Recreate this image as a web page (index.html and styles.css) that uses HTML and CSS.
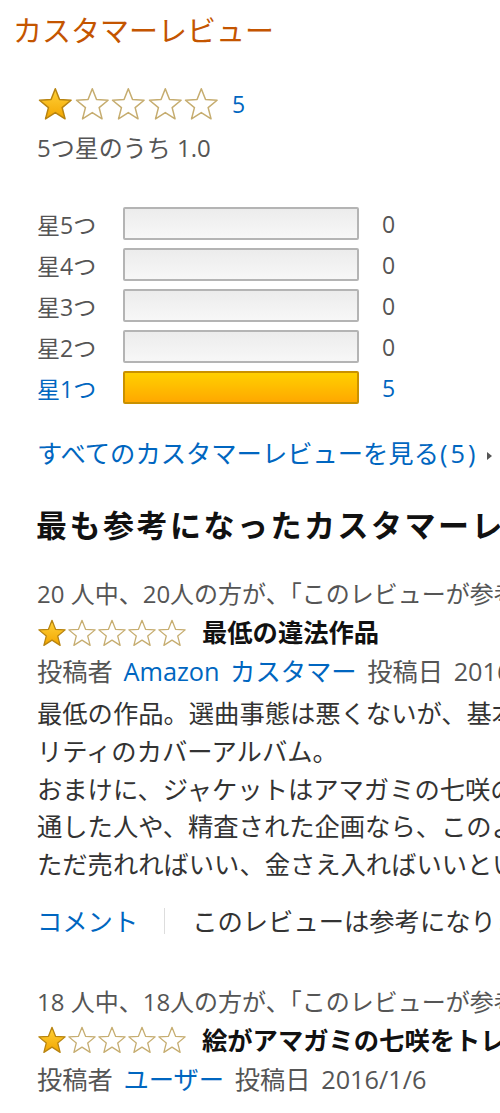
FILE: index.html
```html
<!DOCTYPE html>
<html lang="ja">
<head>
<meta charset="utf-8">
<title>カスタマーレビュー</title>
<link rel="stylesheet" href="styles.css">
</head>
<body>
<svg class="defs" width="0" height="0" aria-hidden="true">
  <defs>
    <linearGradient id="gold" x1="0" y1="0" x2="0" y2="1">
      <stop offset="0" stop-color="#ffd23a"/>
      <stop offset="1" stop-color="#f3a600"/>
    </linearGradient>
    <symbol id="star-full" viewBox="-1 -1 26 26">
      <path d="M12 1 L15.06 8.79 L23.41 9.29 L16.95 14.61 L19.05 22.71 L12 18.2 L4.95 22.71 L7.05 14.61 L0.59 9.29 L8.94 8.79 Z" fill="url(#gold)" stroke="#b88410" stroke-width="1.1" stroke-linejoin="round"/>
    </symbol>
    <symbol id="star-empty" viewBox="-1 -1 26 26">
      <path d="M12 1 L15.06 8.79 L23.41 9.29 L16.95 14.61 L19.05 22.71 L12 18.2 L4.95 22.71 L7.05 14.61 L0.59 9.29 L8.94 8.79 Z" fill="#fff" stroke="#c6ad70" stroke-width="1.1" stroke-linejoin="round"/>
    </symbol>
  </defs>
</svg>

<div class="page">
  <h2 class="title">カスタマーレビュー</h2>

  <div class="summary">
    <div class="stars-row">
      <span class="stars big">
        <svg class="star"><use href="#star-full"/></svg><svg class="star"><use href="#star-empty"/></svg><svg class="star"><use href="#star-empty"/></svg><svg class="star"><use href="#star-empty"/></svg><svg class="star"><use href="#star-empty"/></svg>
      </span>
      <a class="link total">5</a>
    </div>
    <div class="avg">5つ星のうち 1.0</div>
  </div>

  <div class="histogram">
    <div class="hist-row"><span class="hist-label">星5つ</span><span class="bar"></span><span class="hist-count">0</span></div>
    <div class="hist-row"><span class="hist-label">星4つ</span><span class="bar"></span><span class="hist-count">0</span></div>
    <div class="hist-row"><span class="hist-label">星3つ</span><span class="bar"></span><span class="hist-count">0</span></div>
    <div class="hist-row"><span class="hist-label">星2つ</span><span class="bar"></span><span class="hist-count">0</span></div>
    <div class="hist-row active"><span class="hist-label">星1つ</span><span class="bar filled"></span><span class="hist-count">5</span></div>
  </div>

  <a class="link all-link">すべてのカスタマーレビューを見る<span class="paren">(5)</span><span class="arrow"></span></a>

  <h3 class="section-heading">最も参考になったカスタマーレビュー</h3>

  <div class="review">
    <div class="helpful">20 人中、20人の方が、「このレビューが参考になった」と投票しています。</div>
    <div class="review-head">
      <span class="stars small">
        <svg class="star"><use href="#star-full"/></svg><svg class="star"><use href="#star-empty"/></svg><svg class="star"><use href="#star-empty"/></svg><svg class="star"><use href="#star-empty"/></svg><svg class="star"><use href="#star-empty"/></svg>
      </span>
      <span class="review-title">最低の違法作品</span>
    </div>
    <div class="byline">投稿者 <a class="link">Amazon カスタマー</a> 投稿日 2016/1/5</div>
    <div class="review-body">最低の作品。選曲事態は悪くないが、基本的にはクオ<br>リティのカバーアルバム。<br>おまけに、ジャケットはアマガミの七咲のトレースです。<br>通した人や、精査された企画なら、このようなことはないはず。<br>ただ売れればいい、金さえ入ればいいという姿勢が見えます。</div>
    <div class="actions"><a class="link">コメント</a><span class="sep"></span><span class="ask">このレビューは参考になりましたか？</span></div>
  </div>

  <div class="review second">
    <div class="helpful">18 人中、18人の方が、「このレビューが参考になった」と投票しています。</div>
    <div class="review-head">
      <span class="stars small">
        <svg class="star"><use href="#star-full"/></svg><svg class="star"><use href="#star-empty"/></svg><svg class="star"><use href="#star-empty"/></svg><svg class="star"><use href="#star-empty"/></svg><svg class="star"><use href="#star-empty"/></svg>
      </span>
      <span class="review-title">絵がアマガミの七咲をトレースしたもの</span>
    </div>
    <div class="byline">投稿者 <a class="link">ユーザー</a> 投稿日 2016/1/6</div>
  </div>
</div>
</body>
</html>
```

FILE: styles.css
```css
html, body {
  margin: 0;
  padding: 0;
  background: #fff;
}

body {
  width: 500px;
  height: 1113px;
  overflow: hidden;
  font-family: "Open Sans", "Noto Sans CJK JP", sans-serif;
  font-size: 25.3px;
  color: #555;
}

.defs {
  position: absolute;
  width: 0;
  height: 0;
}

.page {
  width: 900px;
  white-space: nowrap;
}

.link {
  color: #0066c0;
  text-decoration: none;
}

.title {
  margin: 0;
  padding: 13px 0 0 13px;
  font-size: 29px;
  line-height: 36px;
  font-weight: normal;
  color: #c45500;
}

.summary {
  margin-top: 37px;
  padding-left: 37px;
}

.stars-row {
  display: flex;
  align-items: center;
  height: 36px;
}

.stars {
  display: inline-flex;
  align-items: center;
}

.stars.big .star {
  width: 36.6px;
  height: 36px;
}

.stars.small .star {
  width: 30px;
  height: 30px;
}

.total {
  margin-left: 12px;
  font-size: 23px;
}

.avg {
  margin-top: 11px;
  line-height: 30px;
  font-size: 24px;
}

.histogram {
  margin-top: 40px;
  padding-left: 37px;
}

.hist-row {
  display: flex;
  align-items: center;
  height: 41px;
}

.hist-label {
  width: 86px;
  font-size: 23px;
}

.bar {
  box-sizing: border-box;
  width: 236px;
  height: 33px;
  border: 2px solid #b4b4b4;
  border-radius: 2px;
  background: linear-gradient(#ececec, #f7f7f7);
}

.bar.filled {
  border-color: #c99100;
  background: linear-gradient(#ffd000, #ffa800);
}

.hist-count {
  margin-left: 23px;
  font-size: 23px;
}

.hist-row.active .hist-label,
.hist-row.active .hist-count {
  color: #0066c0;
}

.all-link {
  display: block;
  margin-top: 28px;
  padding-left: 37px;
  line-height: 34px;
}

.paren {
  letter-spacing: 3px;
  margin-left: 1px;
}

.arrow {
  display: inline-block;
  margin-left: 9px;
  vertical-align: middle;
  width: 0;
  height: 0;
  border-top: 4px solid transparent;
  border-bottom: 4px solid transparent;
  border-left: 5px solid #555;
}

.section-heading {
  margin: 35px 0 0;
  padding-left: 36px;
  font-size: 31px;
  letter-spacing: 2.5px;
  line-height: 40px;
  color: #111;
  font-weight: bold;
}

.review {
  margin-top: 29px;
  padding-left: 37px;
}

.review.second {
  margin-top: 42px;
}

.helpful,
.review-head,
.byline {
  height: 39px;
  line-height: 39px;
}

.helpful {
  font-size: 24px;
}

.byline {
  word-spacing: 4px;
}

.review-head {
  display: flex;
  align-items: center;
}

.review-title {
  margin-left: 15px;
  font-weight: bold;
  color: #111;
}

.review-body {
  margin-top: 4px;
  line-height: 37.75px;
  color: #333;
}

.actions {
  display: flex;
  align-items: center;
  margin-top: 18px;
  height: 38px;
  line-height: 38px;
}

.sep {
  display: inline-block;
  width: 1px;
  height: 26px;
  margin: 0 27px 0 26px;
  background: #ddd;
}

.ask {
  color: #333;
}
```
